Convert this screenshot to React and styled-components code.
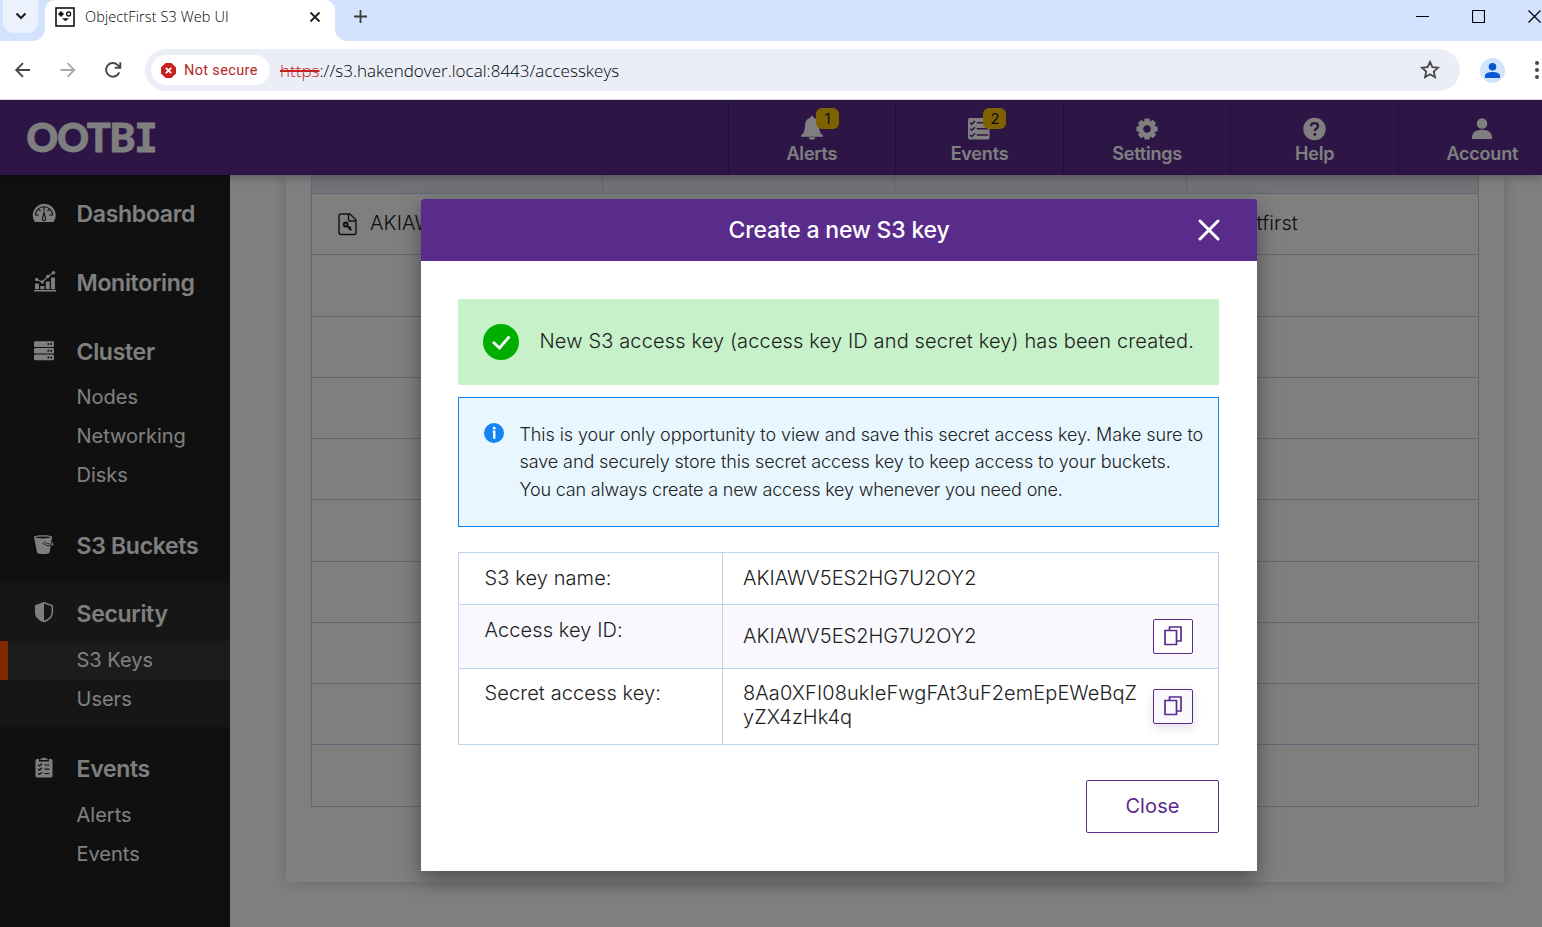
import React from "react";
import styled, { createGlobalStyle } from "styled-components";

const Global = createGlobalStyle`
  * { box-sizing: border-box; }
  html, body { margin: 0; padding: 0; overflow: hidden; }
  body { font-family: Inter, "Liberation Sans", sans-serif; color: #212121; }
  button { font: inherit; }
`;

const Window = styled.div`
  width: 1542px;
  height: 927px;
  overflow: hidden;
  display: flex;
  flex-direction: column;
  background: #fff;
`;

/* ---------- browser chrome ---------- */
const TabStrip = styled.div`
  height: 41px;
  flex: none;
  display: flex;
  align-items: flex-start;
  background: #d3e3fd;
`;
const TabSearch = styled.div`
  width: 35px;
  height: 33px;
  margin-left: 3px;
  border-radius: 0 0 11px 11px;
  background: #ebf2fe;
  display: flex;
  justify-content: center;
  padding-top: 7px;
`;
const Tab = styled.div`
  position: relative;
  width: 290px;
  height: 41px;
  margin-left: 7px;
  padding: 0 13px 8px 10px;
  display: flex;
  align-items: center;
  background: #fff;
  border-radius: 10px 10px 0 0;
  &::before, &::after {
    content: "";
    position: absolute;
    bottom: 0;
    width: 12px;
    height: 12px;
  }
  &::before { left: -12px; background: radial-gradient(circle at 0 0, transparent 11.5px, #fff 12px); }
  &::after { right: -12px; background: radial-gradient(circle at 100% 0, transparent 11.5px, #fff 12px); }
`;
const TabTitle = styled.span`
  flex: 1;
  margin-left: 10px;
  font: 300 14.5px "Open Sans", sans-serif;
  letter-spacing: 0.1px;
  color: #000;
  white-space: nowrap;
`;
const NewTab = styled.div`
  margin: 9px 0 0 18px;
  line-height: 0;
`;
const WindowControls = styled.div`
  display: flex;
  flex: none;
  gap: 43px;
  margin: 10px 0 0 1048px;
  line-height: 0;
  svg { flex: none; }
`;
const Toolbar = styled.div`
  height: 59px;
  flex: none;
  display: flex;
  align-items: center;
  padding-left: 13px;
  border-bottom: 1px solid #dcdcdf;
  background: #fff;
`;
const NavButtons = styled.div`
  display: flex;
  gap: 25px;
  line-height: 0;
  margin: 0 22px 0 -0.5px;
`;
const AddressBar = styled.div`
  width: 1315px;
  flex: none;
  height: 42px;
  border-radius: 21px;
  background: #ebeef7;
  display: flex;
  align-items: center;
  padding: 0 19px 0 6px;
`;
const SecurityChip = styled.div`
  width: 119px;
  height: 30px;
  border-radius: 15px;
  background: #fff;
  display: flex;
  align-items: center;
  gap: 8px;
  padding-left: 10.5px;
  color: #b3261e;
  font: 450 14.5px Roboto, sans-serif;
  letter-spacing: 0.35px;
  white-space: nowrap;
`;
const Url = styled.div`
  flex: 1;
  margin-left: 10.5px;
  font: 300 17px "Open Sans", sans-serif;
  letter-spacing: 0.02px;
  color: #000;
  white-space: nowrap;
  s { color: #c5221f; text-decoration-thickness: 2px; }
`;
const Avatar = styled.div`
  width: 25px;
  height: 25px;
  flex: none;
  margin: 0 30px 0 20px;
  border-radius: 50%;
  background: #d0e4fb;
  line-height: 0;
`;
const MenuDots = styled.svg`
  flex: none;
  margin-left: -7.5px;
`;

/* ---------- application shell ---------- */
const Application = styled.div`
  position: relative;
  flex: 1;
  min-height: 0;
  display: flex;
  flex-direction: column;
  overflow: hidden;
`;
const Header = styled.header`
  height: 75px;
  flex: none;
  display: flex;
  position: relative;
  z-index: 1;
  background: #5a2c8c;
  box-shadow: 0 2px 10px rgba(0, 0, 0, 0.3);
  color: #fff;
`;
const Brand = styled.div`
  width: 727.6px;
  flex: none;
  padding: 0 0 0 26.5px;
  font: 900 39px/75px Lato, sans-serif;
  letter-spacing: -1px;
  -webkit-text-stroke: 1px #fff;
  white-space: nowrap;
  span { font: 700 39px/75px "DejaVu Sans Mono", monospace; }
`;
const TopItem = styled.div`
  width: 167.6px;
  flex: none;
  border-left: 1px solid #42206a;
  display: flex;
  flex-direction: column;
  align-items: center;
  padding: 16px 0 0;
  font-size: 18px;
  font-weight: 600;
  line-height: 24px;
  letter-spacing: -0.2px;
`;
const TopIcon = styled.div`
  position: relative;
  height: 26px;
  line-height: 0;
`;
const Badge = styled.span`
  position: absolute;
  left: 15px;
  top: -8px;
  width: 23px;
  height: 21px;
  border-radius: 6px;
  background: #ffc400;
  color: #212121;
  font-size: 15px;
  font-weight: 400;
  line-height: 21px;
  text-align: center;
`;
const Body = styled.div`
  flex: 1;
  min-height: 0;
  display: flex;
`;
const Sidebar = styled.nav`
  width: 230px;
  flex: none;
  display: flex;
  flex-direction: column;
  gap: 10.4px;
  padding-top: 8px;
  background: #202020;
  color: #fff;
`;
const Group = styled.div`
  background: ${(p) => (p.$open ? "#2c2c2c" : "transparent")};
  padding-bottom: ${(p) => (p.$nested ? "8.4px" : 0)};
`;
const GroupTitle = styled.div`
  height: 58.2px;
  display: flex;
  align-items: center;
  padding: 4.6px 0 0 32px;
  font-size: 23px;
  font-weight: 600;
  letter-spacing: -0.3px;
  svg { flex: none; margin: -4px 20.5px 0 0; }
`;
const SubItem = styled.div`
  height: 39px;
  padding-left: ${(p) => (p.$active ? "68.5px" : "76.5px")};
  border-left: ${(p) => (p.$active ? "8px solid #ff5000" : "0")};
  background: ${(p) => (p.$active ? "#383838" : "transparent")};
  font-size: 20px;
  line-height: 38px;
  letter-spacing: 0;
`;
const Content = styled.main`
  flex: 1;
  padding: 0 38px 45px 56px;
  background: #fff;
`;
const Card = styled.section`
  height: 100%;
  padding: 0 25px;
  box-shadow: 0 0 14px rgba(0, 0, 0, 0.2);
`;
const KeyTable = styled.div`
  border: 1px solid #bdd3ea;
  border-top: 0;
`;
const HeadRow = styled.div`
  height: 18px;
  display: grid;
  grid-template-columns: 290px 292px 292px 1fr;
  background: #e4e4ee;
  div + div { border-left: 1px solid #bdd3ea; }
`;
const KeyRow = styled.div`
  height: 61.25px;
  display: flex;
  align-items: center;
  border-top: 1px solid #bdd3ea;
  padding: 0 180px 2px 26px;
  font-size: 20px;
  font-weight: 300;
  letter-spacing: 0.15px;
  svg { margin: 3px 13px 0 0; }
  span:last-child { margin-left: auto; }
`;

/* ---------- dialog ---------- */
const Overlay = styled.div`
  position: absolute;
  inset: 0;
  z-index: 2;
  background: rgba(0, 0, 0, 0.5);
  padding: 99px 0 0 421px;
`;
const Dialog = styled.div`
  width: 836px;
  height: 672px;
  border-radius: 2px 2px 0 0;
  background: #fff;
  box-shadow: 0 8px 22px rgba(0, 0, 0, 0.4);
  font-weight: 300;
`;
const DialogHeader = styled.div`
  height: 62px;
  display: flex;
  align-items: center;
  justify-content: center;
  position: relative;
  border-radius: 2px 2px 0 0;
  background: #592c8c;
  color: #fff;
  font-size: 23px;
  font-weight: 500;
  letter-spacing: -0.2px;
  svg { position: absolute; right: 37px; top: 20px; }
`;
const DialogBody = styled.div`
  padding: 38px 38px 0 37px;
  display: flex;
  flex-direction: column;
`;
const Success = styled.div`
  height: 86px;
  display: flex;
  align-items: center;
  gap: 20.5px;
  padding-left: 25px;
  border-radius: 2px;
  background: #c7f1c9;
  font-size: 20px;
  letter-spacing: 0.14px;
  white-space: nowrap;
  span { padding-bottom: 2px; }
`;
const Notice = styled.div`
  height: 130px;
  margin-top: 12px;
  display: flex;
  gap: 15.5px;
  padding: 22.6px 0 0 25px;
  border: 1px solid #1583e9;
  background: #e8f7ff;
  font-size: 18px;
  line-height: 27.5px;
  letter-spacing: -0.09px;
  white-space: nowrap;
  svg { flex: none; margin-top: 2.4px; }
`;
const NoticeHint = styled.span`
  letter-spacing: -0.19px;
`;
const Details = styled.div`
  margin-top: 25px;
  border: 1px solid #bdd3ea;
`;
const DetailRow = styled.div`
  height: ${(p) => p.$height}px;
  display: grid;
  grid-template-columns: 263px 1fr;
  background: ${(p) => (p.$tinted ? "#f9f9fd" : "#fff")};
  font-size: 20px;
  line-height: 24px;
  letter-spacing: 0.1px;
  & + & { border-top: 1px solid #bdd3ea; }
`;
const DetailLabel = styled.div`
  padding: ${(p) => p.$top || 13}px 0 0 25.5px;
`;
const DetailValue = styled.div`
  border-left: 1px solid #bdd3ea;
  padding: ${(p) => p.$top}px 25px 0 20px;
  letter-spacing: ${(p) => (p.$long ? "0.08px" : "0")};
  display: flex;
  align-items: flex-start;
  justify-content: space-between;
  white-space: nowrap;
`;
const CopyButton = styled.button`
  width: 40px;
  height: 35px;
  margin-top: ${(p) => p.$offset}px;
  padding: 0 1px 1px 0;
  display: flex;
  align-items: center;
  justify-content: center;
  border: 1px solid #592c8c;
  border-radius: 2px;
  background: ${(p) => (p.$hover ? "#f9f9fd" : "#fff")};
  box-shadow: ${(p) => (p.$hover ? "0 4px 10px rgba(60, 40, 90, 0.15)" : "none")};
`;
const CloseButton = styled.button`
  align-self: flex-end;
  width: 133px;
  height: 53px;
  margin-top: 35px;
  padding: 0 0 2px;
  border: 1px solid #592c8c;
  border-radius: 2px;
  background: #fff;
  color: #592c8c;
  font-size: 20px;
  font-weight: 400;
  letter-spacing: 0.1px;
`;

/* ---------- icons ---------- */
const Line = ({ w, h = w, d, color = "#1f1f1f", sw = 2, cap = "butt", box, children }) => (
  <svg width={w} height={h} viewBox={box || `0 0 ${w} ${h}`} fill="none" stroke={color} strokeWidth={sw} strokeLinecap={cap}>
    {d && <path d={d} />}
    {children}
  </svg>
);
const Favicon = () => (
  <svg width="20" height="20" viewBox="0 0 20 20" fill="none" stroke="#111">
    <rect x="1" y="1" width="18" height="18" strokeWidth="1.6" />
    <path d="M3.5 7h5M6 4.5v5" strokeWidth="2.4" />
    <circle cx="13.6" cy="7" r="2" strokeWidth="1.3" />
    <path d="M7 11.3h7l-3.5 3z" fill="#111" stroke="none" />
  </svg>
);
const NotSecureIcon = () => (
  <svg width="15" height="15" viewBox="0 0 15 15">
    <path d="M4.6 0h5.8L15 4.6v5.8L10.4 15H4.6L0 10.4V4.6z" fill="#c5221f" />
    <path d="M4.8 4.8l5.4 5.4M10.2 4.8l-5.4 5.4" stroke="#fff" strokeWidth="1.8" />
  </svg>
);
const Bell = () => (
  <svg width="22" height="24" viewBox="0 0 22 24" fill="#fff">
    <path d="M11 0c1 0 1.500.7 1.600 1.700C16 2.600 18 5.300 18 9c0 6 1.500 8.500 4 10.500v1.200H0v-1.200C2.500 17.500 4 15 4 9c0-3.700 2-6.400 5.400-7.300C9.500.7 10 0 11 0zM7.700 21.300h6.600a3.300 2.500 0 0 1-6.600 0z" />
  </svg>
);
const ListIcon = () => (
  <svg width="22" height="24" viewBox="0 -2 22 24">
    <rect width="21.500" height="21.500" rx="1.800" fill="#fff" />
    <g fill="none" stroke="#5a2c8c" strokeWidth="1.500">
      <path d="M2 4.500l1.700 1.600L7 3M2 10.700l1.700 1.600L7 9.200M2 16.900l1.700 1.600L7 15.400M8.800 4.700H20M8.800 10.800H20M8.800 17H20" />
    </g>
  </svg>
);
const Gear = () => (
  <svg width="22" height="26" viewBox="-11 -13 22 26">
    <g fill="#fff">
      {[0, 45, 90, 135, 180, 225, 270, 315].map((a) => (
        <rect key={a} x="-2.700" y="-10.600" width="5.400" height="5" rx="1.400" transform={`rotate(${a})`} />
      ))}
    </g>
    <circle r="6.200" fill="none" stroke="#fff" strokeWidth="4.800" />
  </svg>
);
const Help = () => (
  <svg width="23" height="25" viewBox="0 -1.500 23 25">
    <circle cx="11.500" cy="11.500" r="11.200" fill="#fff" />
    <path d="M8 8.800C8 6.700 9.600 5.700 11.500 5.700s3.600 1.100 3.600 3c0 2.200-3.300 2.400-3.300 4.900" fill="none" stroke="#5a2c8c" strokeWidth="2.300" />
    <circle cx="11.800" cy="16.800" r="1.500" fill="#5a2c8c" />
  </svg>
);
const Person = () => (
  <svg width="20" height="24" viewBox="0 -2 20 24" fill="#fff">
    <circle cx="10" cy="5.500" r="5.300" />
    <path d="M0 21v-1.500c0-5 4-7.700 10-7.700s10 2.700 10 7.700v1.500z" />
  </svg>
);
const Dash = () => (
  <svg width="24" height="24" viewBox="0 0 24 24">
    <path d="M3 22.500A11.500 11.500 0 1 1 21.500 22.500z" fill="#fff" transform="translate(0 -.5)" />
    <g fill="none" stroke="#202020" strokeWidth="1.100">
      <path d="M3.300 15.500a8.700 8.700 0 0 1 17.400 0M3.300 15h3.500M17.200 15h3.500M12 6.500v4M6 8.900l2.500 2.300M18 8.900l-2.500 2.300" />
      <path d="M12 12.500l1.700 6.500a1.700 1.700 0 1 1-3.400 0z" />
    </g>
  </svg>
);
const Chart = () => (
  <svg width="24" height="24" viewBox="0 0 24 24" fill="#fff">
    <path d="M2 21h22v1.600H2zM3 14.500h4V20.300H3zM8.300 17h4v3.300h-4zM13.800 12.500h3.900v7.800h-3.900zM19 8.500h4v11.800h-4z" />
    <circle cx="4.700" cy="10.500" r="1.700" /><circle cx="10.300" cy="13" r="1.700" /><circle cx="15.800" cy="7.500" r="1.700" /><circle cx="21.500" cy="3.700" r="1.800" />
    <path d="M4.700 10.500l5.600 2.500 5.500-5.500 5.700-3.800" fill="none" stroke="#fff" strokeWidth="1.100" />
  </svg>
);
const Servers = () => (
  <svg width="24" height="24" viewBox="0 0 24 24">
    {[3.300, 10, 16.600].map((y) => (
      <g key={y}>
        <rect x="2" y={y} width="20" height="5.600" rx="1.200" fill="#fff" />
        <circle cx="16.300" cy={y + 2.800} r="1" fill="#202020" /><circle cx="19.200" cy={y + 2.800} r="1" fill="#202020" />
      </g>
    ))}
  </svg>
);
const Bucket = () => (
  <svg width="24" height="24" viewBox="0 0 24 24">
    <path d="M2 5C2 2.800 20 2.800 20 5L17.600 20.500c-.6 2-12 2-12.600 0z" fill="#fff" />
    <ellipse cx="11" cy="5.400" rx="7.300" ry="1" fill="#202020" />
    <path d="M11 10.500c3.500 2.300 7 3 10 2.200l-1.200-2.400" fill="none" stroke="#202020" strokeWidth="2.400" />
    <path d="M11 10.500c3.500 2.300 7 3 10 2.200l-1.200-2.400" fill="none" stroke="#fff" strokeWidth="1.100" />
  </svg>
);
const Shield = () => (
  <svg width="24" height="24" viewBox="0 0 24 24">
    <path d="M12 2.800l8.300 3v6.400c0 4.500-3.600 7.700-8.300 9.300-4.700-1.600-8.300-4.800-8.300-9.300V5.800z" fill="none" stroke="#fff" strokeWidth="1.500" />
    <path d="M12 2.800v18.700c-4.700-1.600-8.300-4.800-8.300-9.300V5.800z" fill="#fff" />
  </svg>
);
const Clipboard = () => (
  <svg width="24" height="24" viewBox="0 0 24 24">
    <rect x="3.500" y="4" width="17" height="18.500" rx="1.500" fill="#fff" />
    <path d="M7 4h10v2.500H7z" fill="#202020" />
    <path d="M8.500 5V3.500h1.900a1.800 1.800 0 0 1 3.200 0h1.900V5z" fill="#fff" />
    <path d="M6 9.500l1.500 1.400L10 8.500M6 13.800l1.500 1.400 2.500-2.400M6 18.100l1.500 1.400 2.500-2.400M12.500 10h5M12.500 14.200h5M12.500 18.500h5" fill="none" stroke="#202020" strokeWidth="1.200" />
  </svg>
);
const KeyFile = () => (
  <Line w={19} h={23} sw={1.4} color="#212121">
    <path d="M12 1H3a2 2 0 0 0-2 2v16.500a2 2 0 0 0 2 2h13a2 2 0 0 0 2-2V7zM10.500 1v6a1 1 0 0 0 1 1h6.500" strokeLinejoin="round" />
    <circle cx="7.700" cy="11.500" r="1.900" strokeWidth="2" />
    <path d="M9 12.900l4.300 4.300M11 14.900l1.800-1" strokeWidth="2" />
  </Line>
);
const CopyIcon = () => (
  <Line w={18} h={20} sw={1.7} color="#592c8c">
    <path d="M1 4.500h11.500v14H1zM5.500 4.500V1H17v14h-4.500" />
  </Line>
);
const CheckCircle = () => (
  <svg width="36" height="36" viewBox="0 0 36 36">
    <circle cx="18" cy="18" r="18" fill="#00ae00" />
    <path d="M10 18l6.500 6L26.500 12.500" fill="none" stroke="#fff" strokeWidth="2.800" />
  </svg>
);
const Info = () => (
  <svg width="20" height="20" viewBox="0 0 20 20">
    <circle cx="10" cy="10" r="10" fill="#1583f2" />
    <path d="M8.700 8.700h1.600v7" fill="none" stroke="#fff" strokeWidth="2.300" />
    <circle cx="10.200" cy="5.200" r="1.400" fill="#fff" />
  </svg>
);

const topItems = [
  { label: "Alerts", icon: <Bell />, badge: 1 },
  { label: "Events", icon: <ListIcon />, badge: 2 },
  { label: "Settings", icon: <Gear /> },
  { label: "Help", icon: <Help /> },
  { label: "Account", icon: <Person /> },
];
const menu = [
  { label: "Dashboard", icon: <Dash /> },
  { label: "Monitoring", icon: <Chart /> },
  { label: "Cluster", icon: <Servers />, items: ["Nodes", "Networking", "Disks"] },
  { label: "S3 Buckets", icon: <Bucket /> },
  { label: "Security", icon: <Shield />, items: ["S3 Keys", "Users"], open: true },
  { label: "Events", icon: <Clipboard />, items: ["Alerts", "Events"] },
];

export default function App() {
  return (
    <Window>
      <Global />
      <TabStrip>
        <TabSearch><Line w={12} h={16} d="M1.500 6.500l4.500 4.500 4.500-4.500" sw={2.200} /></TabSearch>
        <Tab>
          <Favicon />
          <TabTitle>ObjectFirst S3 Web UI</TabTitle>
          <Line w={14} d="M2.500 2.500l9 9M11.500 2.500l-9 9" sw={1.900} />
        </Tab>
        <NewTab><Line w={15} d="M7.500 1v13M1 7.500h13" sw={1.800} color="#3c3c3c" /></NewTab>
        <WindowControls>
          <Line w={13} d="M0 6.500h13" sw={1} color="#000" />
          <Line w={13} d="M.5.5h12v12H.5z" sw={1.200} color="#000" />
          <Line w={13} d="M.5.5l12 12M12.500.5l-12 12" sw={1.200} color="#000" />
        </WindowControls>
      </TabStrip>
      <Toolbar>
        <NavButtons>
          <Line w={20} d="M17 10H3.500M10 3.200L3.200 10l6.800 6.800" sw={1.900} color="#474747" />
          <Line w={20} d="M2.500 10h13.500M9.500 3.200l6.800 6.800-6.800 6.800" sw={1.900} color="#a9a9a9" />
          <Line w={20} d="M16.200 12.300A6.800 6.800 0 1 1 14.800 5.200L17 7.400M17.300 2.300v5.500h-5.500" sw={1.900} color="#474747" />
        </NavButtons>
        <AddressBar>
          <SecurityChip><NotSecureIcon />Not secure</SecurityChip>
          <Url><s>https</s>://s3.hakendover.local:8443/accesskeys</Url>
          <Line w={22} d="M11 3l2.400 5.200 5.600.6-4.200 3.800 1.200 5.600-5-2.900-5 2.900 1.200-5.600L3 8.800l5.600-.6z" sw={1.800} color="#474747" />
        </AddressBar>
        <Avatar>
          <svg width="25" height="25" viewBox="0 0 25 25" fill="#0b57d0">
            <circle cx="12.500" cy="8.700" r="3.800" />
            <path d="M5 20v-2c0-3 3.500-4 7.500-4s7.500 1 7.500 4v2z" />
          </svg>
        </Avatar>
        <MenuDots width="20" height="20" viewBox="0 0 20 20" fill="#474747">
          <circle cx="10" cy="3" r="2" /><circle cx="10" cy="10" r="2" /><circle cx="10" cy="17" r="2" />
        </MenuDots>
      </Toolbar>
      <Application>
        <Header>
          <Brand>OOTB<span>I</span></Brand>
          {topItems.map((t) => (
            <TopItem key={t.label}>
              <TopIcon>{t.icon}{t.badge && <Badge>{t.badge}</Badge>}</TopIcon>
              {t.label}
            </TopItem>
          ))}
        </Header>
        <Body>
          <Sidebar>
            {menu.map((g) => (
              <Group key={g.label} $open={g.open} $nested={!!g.items}>
                <GroupTitle>{g.icon}{g.label}</GroupTitle>
                {(g.items || []).map((s) => <SubItem key={s} $active={s === "S3 Keys"}>{s}</SubItem>)}
              </Group>
            ))}
          </Sidebar>
          <Content>
            <Card>
              <KeyTable>
                <HeadRow><div /><div /><div /><div /></HeadRow>
                <KeyRow><KeyFile /><span>AKIAWV5ES2HG7U2OY2</span><span>objectfirst</span></KeyRow>
                {Array.from({ length: 9 }, (_, i) => <KeyRow key={i} />)}
              </KeyTable>
            </Card>
          </Content>
        </Body>
        <Overlay>
          <Dialog>
            <DialogHeader>
              Create a new S3 key
              <Line w={22} d="M2 2l18 18M20 2L2 20" sw={3} color="#fff" cap="round" />
            </DialogHeader>
            <DialogBody>
              <Success>
                <CheckCircle />
                <span>New S3 access key (access key ID and secret key) has been created.</span>
              </Success>
              <Notice>
                <Info />
                <div>
                  This is your only opportunity to view and save this secret access key. Make sure to<br />
                  save and securely store this secret access key to keep access to your buckets.<br />
                  <NoticeHint>You can always create a new access key whenever you need one.</NoticeHint>
                </div>
              </Notice>
              <Details>
                <DetailRow $height={51}>
                  <DetailLabel>S3 key name:</DetailLabel>
                  <DetailValue $top={13}>AKIAWV5ES2HG7U2OY2</DetailValue>
                </DetailRow>
                <DetailRow $height={64} $tinted>
                  <DetailLabel>Access key ID:</DetailLabel>
                  <DetailValue $top={19}>AKIAWV5ES2HG7U2OY2<CopyButton $offset={-5} aria-label="Copy access key ID"><CopyIcon /></CopyButton></DetailValue>
                </DetailRow>
                <DetailRow $height={76}>
                  <DetailLabel $top={12}>Secret access key:</DetailLabel>
                  <DetailValue $top={12} $long>
                    <div>8Aa0XFI08ukIeFwgFAt3uF2emEpEWeBqZ<br />yZX4zHk4q</div>
                    <CopyButton $hover $offset={8} aria-label="Copy secret access key"><CopyIcon /></CopyButton>
                  </DetailValue>
                </DetailRow>
              </Details>
              <CloseButton>Close</CloseButton>
            </DialogBody>
          </Dialog>
        </Overlay>
      </Application>
    </Window>
  );
}
